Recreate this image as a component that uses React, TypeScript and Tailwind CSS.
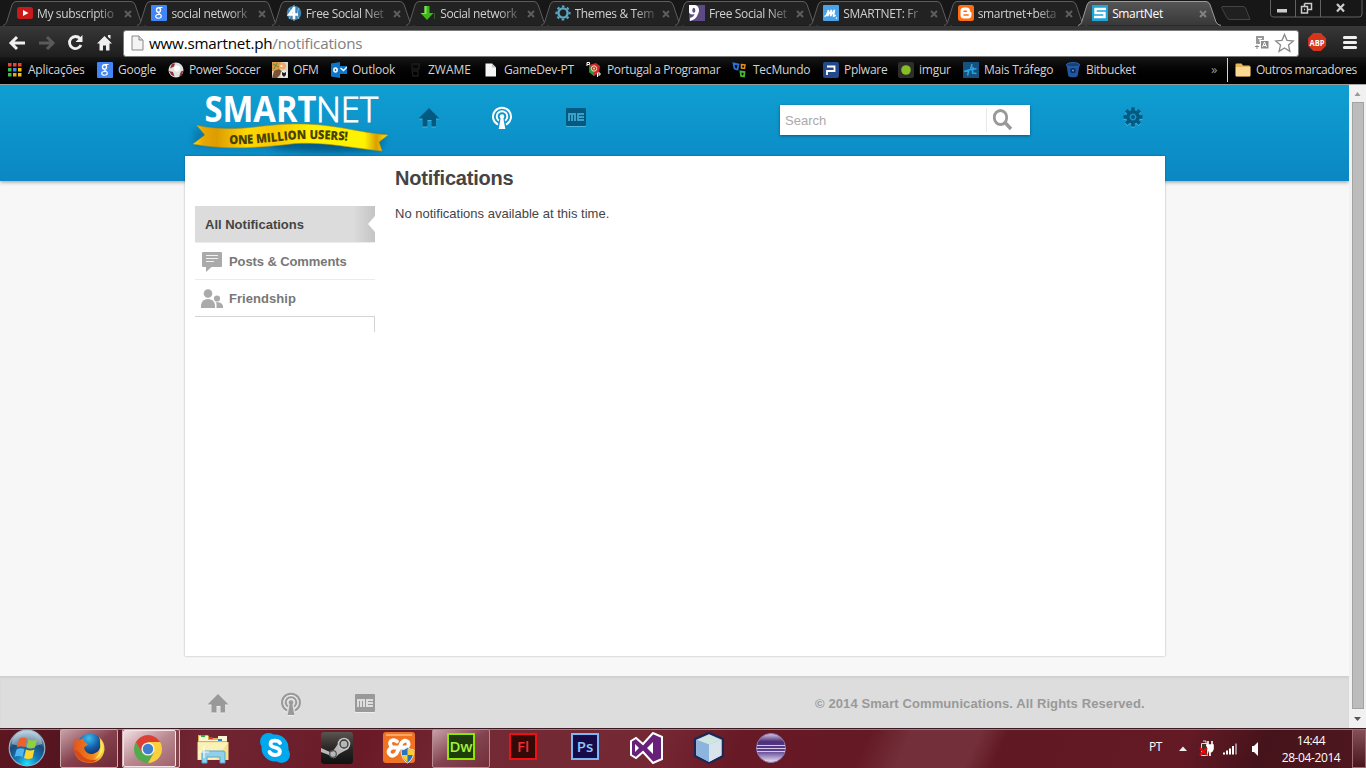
import React from "react";

type IconProps = { className?: string };

const Svg = ({ s = 16, box = "0 0 16 16", children, className = "" }: { s?: number; box?: string; children: React.ReactNode; className?: string }) => (
  <svg width={s} height={s} viewBox={box} className={`shrink-0 ${className}`}>{children}</svg>
);

/* ---------- favicons ---------- */
const YouTube = () => (
  <Svg><rect x="0" y="2" width="16" height="12" rx="2.5" fill="#c81a1a" /><path d="M6 5l5.5 3L6 11z" fill="#fff" /></Svg>
);
const GoogleG = () => (
  <Svg>
    <rect width="16" height="16" rx="1" fill="#4285f4" />
    <g fill="none" stroke="#fff"><ellipse cx="7.500" cy="5" rx="2" ry="2.300" strokeWidth="1.400" /><path d="M8 2.500h3.500M8 7.500c-1.500 1 2.300 1.600 2.300 3.500 0 3-5.600 2.800-5.600.4 0-1.500 1.800-2 3.800-2" strokeWidth="1.200" /></g>
  </Svg>
);
const Four = () => (
  <Svg>
    <circle cx="8" cy="8" r="7.3" fill="#3d83b4" />
    <path d="M8 0v16M3 3c2 2 2 9 0 11M13 3c-2 2-2 9 0 11" stroke="#8fc1e0" fill="none" />
    <path d="M8 2v12M8.500 2.500L3.300 9.500H12" stroke="#fff" strokeWidth="2.600" fill="none" />
  </Svg>
);
const Down = () => (
  <Svg><path d="M4.500 1h5v7h4L7 15 .5 8h4z" fill="#3cb81a" /><path d="M4.500 1h2v8H3L.5 8h4z" fill="#8be25a" /><path d="M14.500 8v6" stroke="#3a5a2c" /></Svg>
);
const GearRing = () => (
  <Svg>
    <circle cx="8" cy="8" r="4.600" fill="none" stroke="#5ba7c4" strokeWidth="2.400" />
    <circle cx="8" cy="8" r="6.600" fill="none" stroke="#5ba7c4" strokeWidth="2" strokeDasharray="2.600 2.580" strokeDashoffset="1.300" />
  </Svg>
);
const Nine = () => (
  <Svg><rect width="16" height="16" fill="#5d4a85" /><path d="M0 0h6c4 1 5 5 3 9-1.500 4-4 6-8 7v-3c3-1 4-2 4.500-4C3 10 0 9 0 7z" fill="#fff" /><ellipse cx="4.800" cy="5.300" rx="1.500" ry="2.500" fill="#5d4a85" /></Svg>
);
const MIcon = () => (
  <Svg><rect width="16" height="16" rx="1" fill="#4aa3e8" /><path d="M1.500 11.500q2 0 4-6.500l-1 6 4-6-1 6 4-6-1 6q1 .5 2-1" stroke="#fff" strokeWidth="1.500" fill="none" /><circle cx="13.500" cy="13" r=".8" fill="#fff" /></Svg>
);
const Blogger = () => (
  <Svg><rect width="16" height="16" rx="2.500" fill="#ff6d10" /><path d="M6 2.500h2.500q3.500 0 3.500 3.500 0 1 .800 1t.700 1v2q0 3.500-3.500 3.500H6q-3.500 0-3.500-3.500V6Q2.500 2.500 6 2.500z" fill="#fff" /><path d="M6 6.200h2.500M6 9.900h4.200" stroke="#ff6d10" strokeWidth="1.500" strokeLinecap="round" /></Svg>
);
const SmartS = () => (
  <Svg><rect width="16" height="16" fill="#1ea4d6" /><path d="M14 4H3.500v4h9v4H2" stroke="#fff" strokeWidth="2.400" fill="none" /></Svg>
);

/* ---------- bookmark icons ---------- */
const Apps = () => (
  <Svg>
    {["#e94435", "#e94435", "#e94435", "#3cba54", "#4285f4", "#f4c20d", "#3cba54", "#f4a20d", "#f4c20d"].map((c, i) => (
      <rect key={i} x={1 + (i % 3) * 5} y={1 + Math.floor(i / 3) * 5} width="3.500" height="3.500" fill={c} />
    ))}
  </Svg>
);
const Ball = () => (
  <Svg><circle cx="8" cy="8" r="7.500" fill="#e2e0e0" /><path d="M4 1.500l3 0-1 3-4 2zM1 9l4 1 1.500 4.500-3-1.500zM13 9.500l2.300-1-1.300 4.500-3 1.800z" fill="#8f3038" /><circle cx="9" cy="6.500" r="3" fill="#fff" /></Svg>
);
const Ofm = () => (
  <Svg><rect width="16" height="16" fill="#d7dad0" /><path d="M0 0h9v6l-5 3H0z" fill="#d99a4a" /><circle cx="10.500" cy="4" r="3.500" fill="#f2a765" /><path d="M2 9l5-2 4 3-6 6H0z" fill="#7b5133" /><path d="M1 2l6 3M5 1l-3 6" stroke="#6b8a3a" /><circle cx="12" cy="12" r="3.500" fill="#eee" /><path d="M10 10l2 1 2-1v3l-2 2-2-2z" fill="#222" /><circle cx="9.500" cy="4" r="1" fill="#fff" /></Svg>
);
const OutlookI = () => (
  <Svg><rect x="8" y="4" width="8" height="8" fill="#0d76c8" /><path d="M9.500 6l3 2.500L16 5" stroke="#fff" strokeWidth="1.400" fill="none" /><path d="M0 1.500L9 0v16l-9-1.500z" fill="#0d76c8" /><ellipse cx="4.500" cy="8" rx="1.600" ry="2" fill="none" stroke="#fff" strokeWidth="1.600" /></Svg>
);
const Zw = () => (
  <Svg><path d="M5 2h7v5H5zM5 9h6v5H6zM11 3h2" stroke="#1d1d1d" fill="none" strokeWidth="1.300" /></Svg>
);
const Doc = () => (
  <Svg><path d="M2.500 1.500h6.500l4 4v9H2.500z" fill="#f5f5f5" /><path d="M9 1.500v4h4z" fill="#c5c5c5" /></Svg>
);
const PaP = () => (
  <Svg><path d="M3 3l7-2 4 3-1 7-5 3-5-4z" fill="#cb2a2a" /><path d="M4 4L3 10l5 4 0-5z" fill="#279839" /><circle cx="8" cy="6.500" r="2.700" fill="none" stroke="#f3e3c0" /><circle cx="8" cy="6.500" r="1" fill="#f0e0a0" /><path d="M1 4V.500h2.500v2H1M11.500 15v-4H14v2h-2.500" stroke="#fff" fill="none" /></Svg>
);
const Tec = () => (
  <Svg><path d="M1.500 1.500l5 1-1 5-3-1z" stroke="#2b71d8" strokeWidth="1.800" fill="none" /><path d="M9.500 2.500l3.500.5-.5 3.500-3-.5z" stroke="#e28d27" strokeWidth="1.500" fill="none" /><path d="M8.500 9.500l4 .5-.5 4.500-3-.5z" stroke="#47b733" strokeWidth="1.800" fill="none" /></Svg>
);
const Ppl = () => (
  <Svg><rect width="16" height="16" rx="2" fill="#244a8c" /><path d="M4 13V9h7.500V4.500H4" stroke="#fff" strokeWidth="1.800" fill="none" /></Svg>
);
const Imgur = () => (
  <Svg><rect width="16" height="16" rx="2" fill="#2d2e2c" /><circle cx="8" cy="8" r="4.800" fill="#85bf25" /></Svg>
);
const Mais = () => (
  <Svg><rect width="16" height="16" fill="#16507d" /><path d="M9 2L7.500 8M1 9.500l5-1.500-1.500 5.500M7.500 8l6-1.500M10 5l-.5 6 4 .5" stroke="#29a3df" strokeWidth="1.600" fill="none" /></Svg>
);
const Bucket = () => (
  <Svg><path d="M1.500 3.500l1.800 10.500c1 1.800 8.400 1.800 9.400 0L14.500 3.500z" fill="#2055a0" /><ellipse cx="8" cy="2.800" rx="6.600" ry="2.200" fill="#174078" stroke="#2b67b7" /><circle cx="8" cy="8.500" r="2.600" fill="#0c2a57" /><circle cx="8" cy="8.500" r="1.100" fill="#5b91d5" /></Svg>
);
const Folder = () => (
  <Svg><path d="M.5 2.500q0-1 1-1h5l1.500 2H14q1.500 0 1.500 1.500v8.500q0 1-1 1h-13q-1 0-1-1z" fill="#e5b65a" /><path d="M.8 5h14.400v8.500q0 .700-.7.700h-13q-.7 0-.7-.7z" fill="#fbd993" /></Svg>
);

/* ---------- tabs ---------- */
const tabs: [React.FC, string][] = [
  [YouTube, "My subscriptio"],
  [GoogleG, "social network"],
  [Four, "Free Social Net"],
  [Down, "Social network"],
  [GearRing, "Themes & Tem"],
  [Nine, "Free Social Net"],
  [MIcon, "SMARTNET: Fr"],
  [Blogger, "smartnet+beta"],
  [SmartS, "SmartNet"],
];

const Tab = ({ Icon, label, active }: { Icon: React.FC; label: string; active: boolean }) => (
  <div className={`relative flex h-[26px] w-[134.400px] shrink-0 items-center pl-[12px] ${active ? "z-10" : ""}`}>
    <svg width="146" height="26" viewBox="0 0 146 26" className="absolute top-0 -left-[2px]">
      <defs>
        <linearGradient id="tabOn" x2="0" y2="1"><stop offset="0" stopColor="#555" /><stop offset="1" stopColor="#383838" /></linearGradient>
      </defs>
      <path
        d="M0 25.500Q2.500 25 3.500 22.500L9 5Q10.200 1.500 13 1.500H128Q131 1.500 132.200 5L138 22Q139.500 25 143 25.500"
        fill={active ? "url(#tabOn)" : "#222"}
        stroke={active ? "#9b9b9b" : "#5d5d5d"}
      />
    </svg>
    <div className="relative"><Icon /></div>
    <div
      className={`relative ml-[4px] w-[82px] pt-px text-[12px] leading-[18px] tracking-[-0.360px] whitespace-nowrap ${
        active ? "text-white" : "text-[#d0d0d0] [mask-image:linear-gradient(to_right,black_72%,transparent_104%)]"
      }`}
    >
      {label}
    </div>
    <svg width="8" height="8" viewBox="0 0 8 8" className="relative mt-px ml-[5px]">
      <path d="M1 1l6 6M7 1L1 7" stroke={active ? "#828282" : "#5d5d5d"} strokeWidth="2" />
    </svg>
  </div>
);

const TabStrip = () => (
  <div className="relative flex h-[26px] pl-[5px]">
    {tabs.map(([I, t], i) => <Tab key={i} Icon={I} label={t} active={i === 8} />)}
    <svg width="32" height="26" viewBox="0 0 32 26" className="ml-[4px]">
      <path d="M3 6.500H24Q26 6.500 27 9L31 19.500H11Q8.500 19.500 7.500 17L3 8.500Q2 6.500 4 6.500" fill="#202020" stroke="#444" />
    </svg>
    <svg width="94" height="18" viewBox="0 0 94 18" className="absolute top-0 left-[1270px]">
      <path d="M.5 0V14Q.5 17 3.500 17H89Q92 17 92 14V0M25.500 0V17M50.500 0V17" fill="none" stroke="#626262" />
      <rect x="7" y="9" width="10" height="3.500" fill="#ccc" />
      <path d="M34.500 3.500H41.500V9.500H37.500V6.500H31.500V13H37.500V9.500M34.500 6V3.500M34 9.500h1" fill="none" stroke="#ccc" strokeWidth="1.500" />
      <path d="M67 4l7 7.500M74 4l-7 7.500" stroke="#ccc" strokeWidth="2.200" />
    </svg>
  </div>
);

const Toolbar = () => (
  <div className="flex h-[31px] items-center bg-linear-to-b from-[#383838] to-[#1e1e1e]">
    <svg width="123" height="31" viewBox="0 0 123 31" className="shrink-0">
      <path d="M25 17H11.500M17 11l-6 6 6 6" stroke="#f0f0f0" strokeWidth="3" fill="none" />
      <path d="M39 17H52M47 11l6 6-6 6" stroke="#5a5a5a" strokeWidth="3" fill="none" />
      <path d="M80 12.500A6 6 0 1 0 81 19" stroke="#f0f0f0" strokeWidth="2.800" fill="none" />
      <path d="M82.500 9v7h-7z" fill="#f0f0f0" />
      <path d="M97 17.500L104.500 10 112 17.500h-2.500V24.500h-3.500v-5h-3v5h-3.500v-7zM108 9h2.500v4L108 11z" fill="#f0f0f0" />
    </svg>
    <div className="mt-[3px] flex h-[27px] w-[1176px] shrink-0 items-center rounded-[3px] border border-[#7b7b7b] bg-white pl-[7px]">
      <svg width="13" height="16" viewBox="0 0 13 16" className="shrink-0"><path d="M1 1h7l4 4v10H1z" fill="#f4f4f4" stroke="#888" /><path d="M8 1v4h4" fill="#ddd" stroke="#888" /></svg>
      <div className="-mt-px ml-[5px] w-[1105px] text-[15.200px] leading-[20px] tracking-[-0.210px] text-[#808080]"><span className="text-black">www.smartnet.ph</span>/notifications</div>
      <svg width="42" height="22" viewBox="0 0 42 22" className="shrink-0">
        <rect x="2" y="4" width="8" height="8" fill="#999" /><path d="M4 6.500h4M6 6v4" stroke="#fff" /><rect x="6.500" y="8.500" width="8.500" height="8.500" fill="#8a8a8a" stroke="#fff" /><path d="M8.500 15l2-5 2 5M9.300 13.500h2.500" stroke="#fff" fill="none" /><path d="M1 14.500h4M3 13v4" stroke="#888" fill="none" />
        <path d="M30.500 2.500l2.500 5.800 6.300.6-4.800 4.200 1.400 6.200-5.400-3.300-5.400 3.300 1.400-6.200-4.800-4.200 6.300-.6z" fill="#fff" stroke="#888" strokeWidth="1.300" />
      </svg>
    </div>
    <svg width="66" height="31" viewBox="0 0 66 31" className="shrink-0">
      <path d="M14.300 7h7.500l5.300 5.300v7.400L21.800 25h-7.500L9.100 19.700v-7.400z" fill="#d4351c" />
      <text x="18" y="19.500" textAnchor="middle" textLength="15" lengthAdjust="spacingAndGlyphs" fontFamily="Open Sans" fontWeight="700" fontSize="9.500" fill="#fff">ABP</text>
      <path d="M45.500 11.500h11M45.500 16.500h11M45.500 21.500h11" stroke="#efefef" strokeWidth="3.200" strokeLinecap="round" />
    </svg>
  </div>
);

const Bookmark = ({ Icon, label, w }: { Icon: React.FC; label: string; w: string }) => (
  <div className={`flex shrink-0 items-center gap-[5px] whitespace-nowrap ${w}`}><Icon /><span>{label}</span></div>
);

const Bookmarks = () => (
  <div className="flex h-[27px] items-center bg-linear-to-b from-[#171717] to-black pb-px pl-[7px] font-['Open_Sans',sans-serif] text-[12px] tracking-[-0.240px] text-[#d2d2d2]">
    <Bookmark Icon={Apps} label="Aplicações" w="w-[90px]" />
    <Bookmark Icon={GoogleG} label="Google" w="w-[71px]" />
    <Bookmark Icon={Ball} label="Power Soccer" w="w-[104px] tracking-[-0.350px]" />
    <Bookmark Icon={Ofm} label="OFM" w="w-[59px]" />
    <Bookmark Icon={OutlookI} label="Outlook" w="w-[76px]" />
    <Bookmark Icon={Zw} label="ZWAME" w="w-[76px] tracking-[0px]" />
    <Bookmark Icon={Doc} label="GameDev-PT" w="w-[103px]" />
    <Bookmark Icon={PaP} label="Portugal a Programar" w="w-[146px] tracking-[-0.350px]" />
    <Bookmark Icon={Tec} label="TecMundo" w="w-[91px]" />
    <Bookmark Icon={Ppl} label="Pplware" w="w-[75px]" />
    <Bookmark Icon={Imgur} label="imgur" w="w-[65px]" />
    <Bookmark Icon={Mais} label="Mais Tráfego" w="w-[102px]" />
    <Bookmark Icon={Bucket} label="Bitbucket" w="w-[146px] tracking-[-0.350px]" />
    <span className="w-[16px] text-[13px] text-[#999]">»</span>
    <div className="mr-[7px] h-[24px] w-px bg-[#cdd3dc]" />
    <Bookmark Icon={Folder} label="Outros marcadores" w="w-[125px] tracking-[-0.480px]" />
  </div>
);

/* ---------- site icons ---------- */
const House = ({ className }: IconProps) => (
  <svg width="22" height="20" viewBox="0 0 22 20" className={className}><path d="M11 0L21.500 10.500H18V18.500h-4.500V12h-4v6.500H4.500v-8H.5z" fill="currentColor" /></svg>
);
const Cast = ({ className }: IconProps) => (
  <svg width="22" height="24" viewBox="0 0 22 24" className={className}>
    <g fill="none" stroke="currentColor" strokeWidth="2"><path d="M7 18.700A9 9 0 1 1 15 18.700" /><path d="M7.800 14.700A5.300 5.300 0 1 1 14.200 14.700" /></g>
    <circle cx="11" cy="10.500" r="2.300" fill="currentColor" /><path d="M9.700 12h2.600l2 11H7.700z" fill="currentColor" />
  </svg>
);
const Me = ({ className, ink }: { className?: string; ink: string }) => (
  <svg width="20" height="19" viewBox="0 0 20 19" className={className}>
    <rect width="20" height="18" rx="1" fill="currentColor" />
    <path d="M2 13V5h8v8H8V7H7v6H5V7H4v6zM11 5h7v2h-5v1h5v2h-5v1h5v2h-7z" fill={ink} />
  </svg>
);
const Gear = () => (
  <svg width="20" height="21" viewBox="-10 -10 20 21">
    {[0, 1].map((k) => (
      <g key={k} fill={k ? "#035a80" : "#4ab2dc"} transform={k ? "" : "translate(0 1)"}>
        <circle r="6.800" />
        {[0, 45, 90, 135].map((a) => <rect key={a} x="-1.800" y="-9.600" width="3.600" height="19.200" transform={`rotate(${a})`} />)}
      </g>
    ))}
    <circle r="2.700" fill="none" stroke="#1b93c5" strokeWidth="1.500" />
  </svg>
);

const Logo = () => (
  <svg width="215" height="71" viewBox="0 0 215 71" className="shrink-0">
    <defs>
      <linearGradient id="gold"><stop offset="0" stopColor="#ffe000" /><stop offset=".05" stopColor="#e8a800" /><stop offset=".12" stopColor="#dd9c00" /><stop offset=".28" stopColor="#ffd800" /><stop offset=".42" stopColor="#f8c800" /><stop offset=".6" stopColor="#fff200" /><stop offset=".88" stopColor="#fff200" /><stop offset=".94" stopColor="#d8a000" /><stop offset="1" stopColor="#ffe600" /></linearGradient>
      <filter id="soft" x="-20%" y="-60%" width="140%" height="220%"><feGaussianBlur stdDeviation="3" /></filter>
      <path id="wave" d="M49 59C80 60 105 54 128 54C145 54 155 55 172 56" />
    </defs>
    <ellipse cx="145" cy="60" rx="55" ry="7" fill="#06496d" opacity=".6" filter="url(#soft)" />
    <path d="M14 44L208 50 200 66 14 62z" fill="#064e78" opacity=".35" filter="url(#soft)" />
    <g fill="#fff" fontFamily="Open Sans">
      <text x="24.500" y="36.500" fontSize="35" fontWeight="700" textLength="112" lengthAdjust="spacingAndGlyphs">SMART</text>
      <text x="136" y="36.500" fontSize="35" fontWeight="300" textLength="62" lengthAdjust="spacingAndGlyphs" stroke="#fff" strokeWidth=".9">NET</text>
    </g>
    <path d="M17 40.500C55 49 85 38 120 39C155 39 180 48 208 50L199 57 202 66C165 62 145 57 115 58.500C80 63 45 65 13 59L25 50z" fill="url(#gold)" stroke="#c99200" strokeWidth=".6" />
    <text fontFamily="Open Sans" fontWeight="800" fontSize="12.500" fill="#4a4100"><textPath href="#wave" textLength="119" lengthAdjust="spacingAndGlyphs">ONE MILLION USERS!</textPath></text>
  </svg>
);

const Header = () => (
  <div className="flex h-[96px] items-start bg-linear-to-b from-[#0f9fd1] to-[#0b87c4] pl-[180px] shadow-[0_1px_4px_rgba(0,0,0,0.4)]">
    <Logo />
    <div className="flex w-[385px] pl-[23px] text-[#035a80]">
      <House className="mt-[23px] drop-shadow-[0_1px_0_#4ab2dc]" />
      <Cast className="mt-[21px] ml-[51px] text-white" />
      <Me className="mt-[23px] ml-[53px] drop-shadow-[0_1px_0_#4ab2dc]" ink="#3a9fc9" />
    </div>
    <div className="mt-[20px] flex h-[30px] w-[250px] shrink-0 items-center bg-white pl-[5px] text-[13px] text-[#a9a9a9] shadow-[0_1px_3px_rgba(0,0,0,0.4)]">
      <span className="w-[201px] pt-[2px]">Search</span>
      <div className="mr-[6px] h-[24px] w-px bg-[#e8e8e8]" />
      <svg width="20" height="22" viewBox="0 0 20 22"><ellipse cx="7.500" cy="8.500" rx="6.200" ry="7" fill="none" stroke="#999" strokeWidth="2.800" /><path d="M12 13.500l6 6.500" stroke="#999" strokeWidth="3.400" /></svg>
    </div>
    <div className="mt-[22px] ml-[93px]"><Gear /></div>
  </div>
);

const Sidebar = () => (
  <div className="ml-[10px] w-[180px] pt-[50px] text-[13px] font-bold text-[#777]">
    <div className="flex h-[37px] items-center justify-between border-b border-[#ececec] bg-[linear-gradient(to_right,#dcdcdc_88%,#c4c4c4)] pl-[10px] text-[#444]">
      <span className="pt-[2px]">All Notifications</span>
      <svg width="7" height="16" viewBox="0 0 7 16"><path d="M7 0v16L0 8z" fill="#fff" /></svg>
    </div>
    <div className="flex h-[37px] items-center border-b border-[#ececec] pl-[7px]">
      <svg width="20" height="20" viewBox="0 0 20 20" className="mt-[2px]"><path d="M1 0h18q1 0 1 1v13q0 1-1 1h-9.500L4 20v-5H1q-1 0-1-1V1q0-1 1-1z" fill="#aaa" /><path d="M4 3.500h12M4 6.500h12M4 9.500h8" stroke="#f2f2f2" /></svg>
      <span className="ml-[7px] pt-[2px] tracking-[-0.100px]">Posts &amp; Comments</span>
    </div>
    <div className="flex h-[37px] items-center border-b border-[#d4d4d4] pl-[6px]">
      <svg width="22" height="20" viewBox="0 0 22 20" fill="#aaa" className="mt-[2px]"><circle cx="7" cy="4.500" r="4.300" /><path d="M0 19v-3Q1 10 7 10t7 6v3z" /><circle cx="16" cy="9.500" r="3.100" /><path d="M15.500 19v-4.500l-1-1.200Q21 12.500 22 17v2z" /></svg>
      <span className="ml-[6px] pt-[2px] tracking-[0.060px]">Friendship</span>
    </div>
    <div className="h-[15px] border-r border-[#d4d4d4]" />
  </div>
);

const Page = () => (
  <div className="flex h-[643px] bg-[#f7f7f7] font-['Liberation_Sans',Arial,sans-serif]">
    <div className="w-[1349px]">
      <Header />
      <div className="relative -mt-[25px] ml-[185px] flex h-[500px] w-[980px] bg-white shadow-[0_0_2px_rgba(0,0,0,0.3)]">
        <Sidebar />
        <div className="ml-[20px] pt-[9px] text-[#444]">
          <h1 className="text-[20px] leading-[26px] font-bold tracking-[-0.200px]">Notifications</h1>
          <p className="mt-[13px] text-[13px] leading-[20px] tracking-[0.010px]">No notifications available at this time.</p>
        </div>
      </div>
      <div className="mt-[20px] flex h-[52px] items-start border-t border-[#cfcfcf] bg-[#ddd] pl-[207px] text-[#999] shadow-[inset_0_1px_2px_#d0d0d0]">
        <House className="mt-[17px] drop-shadow-[0_1px_0_#eee]" />
        <Cast className="mt-[15px] ml-[51px] drop-shadow-[0_1px_0_#eee]" />
        <Me className="mt-[17px] ml-[53px] drop-shadow-[0_1px_0_#eee]" ink="#ddd" />
        <span className="mt-[17px] ml-[440px] text-[13px] leading-[20px] font-bold tracking-[0.100px] whitespace-nowrap">© 2014 Smart Communications. All Rights Reserved.</span>
      </div>
    </div>
    <div className="flex w-[17px] flex-col items-center bg-[#f1f1f1]">
      <svg width="17" height="17" viewBox="0 0 17 17"><path d="M5.500 11h6L8.500 7z" fill="#999" /></svg>
      <div className="h-[607px] w-[12px] border border-[#a3a3a3] bg-[#bcbcbc]" />
      <svg width="17" height="19" viewBox="0 0 17 19"><path d="M5 8h7l-3.500 4z" fill="#555" /></svg>
    </div>
  </div>
);

/* ---------- taskbar ---------- */
const Orb = () => (
  <svg width="38" height="38" viewBox="0 0 38 38">
    <defs><radialGradient id="orb" cx=".5" cy=".95" r=".9"><stop offset="0" stopColor="#1ee3ff" /><stop offset=".35" stopColor="#1478b8" /><stop offset=".7" stopColor="#1c4a78" /><stop offset="1" stopColor="#a9c0d0" /></radialGradient></defs>
    <circle cx="19" cy="19" r="17.800" fill="url(#orb)" stroke="#8fb2c6" strokeWidth="1.200" />
    <path d="M4 15A15 14 0 0 1 34 15Q19 21 4 15z" fill="#cfe3ee" opacity=".45" />
    <path d="M11 10q4-2.500 8-.5l-2 8.500q-4-1.500-8 .5z" fill="#f0602a" /><path d="M20.500 10.500q4 2 8.500 0l-2 8q-4.500 2-8.500 0z" fill="#93cf3d" />
    <path d="M8.500 20.500q4-2 8-.5l-2 8q-4-2-8 0z" fill="#4fb4f0" /><path d="M18 20.500q4 2 8.500 0l-2 8.500q-4.500 2-8.500 0z" fill="#ffd42c" />
  </svg>
);
const Firefox = () => (
  <svg width="32" height="32" viewBox="0 0 32 32">
    <defs>
      <linearGradient id="fx" x2="1"><stop offset="0" stopColor="#e2571b" /><stop offset=".6" stopColor="#f0801c" /><stop offset="1" stopColor="#ffd83a" /></linearGradient>
      <radialGradient id="globe" cx=".45" cy=".2" r=".8"><stop offset="0" stopColor="#3cc0ee" /><stop offset=".5" stopColor="#1660ac" /><stop offset="1" stopColor="#0c2359" /></radialGradient>
    </defs>
    <circle cx="17" cy="13.500" r="12" fill="url(#globe)" />
    <path d="M2 6l3.500 2.500Q8 6.500 11 6l0 3 4 3.500-4 3 1 3q4 5 9 3 6-2 6.500-8Q28 9 26 5q6 5 5.500 13Q29 31 16 31 1 30 1 15q0-5 1-9z" fill="url(#fx)" />
    <path d="M27 7q4 5 3 11-2 7-8 9 5-5 5.500-11z" fill="#ffe65a" />
    <path d="M1.500 17Q3 29 16 30.500q5 0 9-3-9 2-15-3Q7 20 1.500 17z" fill="#d84a16" />
  </svg>
);
const Chrome = () => (
  <svg width="30" height="30" viewBox="-15 -15 30 30">
    <path d="M0-7L0 0 -6.060 3.500 -12.120-7A14 14 0 0 0 0 14L6.060 3.500z" fill="#50ab4a" />
    <path d="M0-7H12.120A14 14 0 0 1 0 14L6.060 3.500z" fill="#fbd03b" />
    <path d="M-12.120-7A14 14 0 0 1 12.120-7H0L-6.060 3.500z" fill="#dd3f34" />
    <circle r="6.600" fill="#f1f1f1" /><circle r="5.200" fill="#3f7fcb" />
  </svg>
);
const Explorer = () => (
  <svg width="34" height="32" viewBox="0 0 34 32">
    <path d="M2 3h10l2 3h17v22H2z" fill="#d8b24e" /><path d="M3 4h9v4h10V4h9v5H3z" fill="#fbf6d6" />
    <path d="M5 3h4v2H5z" fill="#2bb52b" /><path d="M13 5h4v2h-4z" fill="#d83a2a" /><path d="M22 7h4v2h-4z" fill="#2a82d8" />
    <path d="M1.500 10h31v18h-31z" fill="#f5e08d" /><path d="M2 10.500h30l-12 17H2z" fill="#fbf0b5" />
    <path d="M6 31V21q0-2 2-2h19q2 0 2 2v10h-5v-6H11v6z" fill="#8fd1ec" stroke="#5aa5c9" />
    <path d="M8 14v12M3 20h10" stroke="#fff" strokeWidth="1.200" opacity=".9" />
  </svg>
);
const Skype = () => (
  <svg width="32" height="32" viewBox="0 0 32 32">
    <circle cx="16" cy="16" r="13.500" fill="#00a9ed" /><circle cx="9.500" cy="9.500" r="8.500" fill="#00a9ed" /><circle cx="22.500" cy="22.500" r="8.500" fill="#00a9ed" />
    <path d="M21 11Q19.500 8.700 16 8.700q-4.500 0-4.500 3.300 0 2.500 4.700 3.500t4.700 4q0 3.500-4.700 3.500-4 0-5.700-3" stroke="#fff" strokeWidth="3.800" fill="none" strokeLinecap="round" />
  </svg>
);
const Steam = () => (
  <svg width="32" height="32" viewBox="0 0 32 32">
    <defs><linearGradient id="st" x2="0" y2="1"><stop offset="0" stopColor="#5b5551" /><stop offset=".5" stopColor="#2a2726" /><stop offset="1" stopColor="#111" /></linearGradient></defs>
    <rect width="32" height="32" rx="3" fill="url(#st)" /><path d="M0 16l9 4 3-1 5-7 10 5-9 5-2 2q-4 5-8-1L0 20z" fill="#b8b8b8" />
    <circle cx="23" cy="12" r="6.300" fill="#c4c4c4" /><circle cx="23" cy="12" r="4" fill="#b5b5b5" stroke="#383838" strokeWidth="1.300" /><circle cx="12" cy="22" r="3.300" fill="none" stroke="#555" strokeWidth="1.200" />
  </svg>
);
const Xampp = () => (
  <svg width="32" height="32" viewBox="0 0 32 32">
    <rect width="32" height="31" rx="3" fill="#ee7424" /><path d="M3 2h26v2H3z" fill="#f9a66c" />
    <path d="M14 9.500q-3-2.500-6-.5-2.500 3 1.500 6.500-5 2-3.500 6 3 4.500 7.500 0L18.500 11q3-4 6.500-1 2 3.500-2.500 6 5 2 4 6.500M9.500 15.500h5M17 15.500h6" stroke="#fff" strokeWidth="3.800" fill="none" strokeLinecap="round" />
    <path d="M18 18q4-.5 6.500-2.500Q27 17.500 31 18q0 9-6.500 13Q18 27 18 18z" fill="#2773c8" stroke="#e9e9e9" /><path d="M24.500 16.500V23H30Q31 20 30.500 18.500zM24.500 23v7Q20 27 19 23z" fill="#f5cf2e" />
  </svg>
);
const Adobe = ({ t, c, bg, fill }: { t: string; c: string; bg: string; fill: string }) => (
  <svg width="28" height="27" viewBox="0 0 28 27" className="-mt-[4px]"><rect x="1" y="1" width="26" height="25" fill={bg} stroke={c} strokeWidth="2" /><text x="14" y="19" textAnchor="middle" fontFamily="Open Sans" fontWeight="600" fontSize="15" fill={fill}>{t}</text></svg>
);
const VStudio = () => (
  <svg width="34" height="32" viewBox="0 0 34 32"><path d="M1 9l5-3 7 6L23 1l9 4v22l-9 4-10-11-7 6-5-3z" fill="#68217a" stroke="#fff" strokeWidth="2" /><path d="M5 12v8l4-4zM17 16l6-6v12z" fill="#fff" /></svg>
);
const Cube = () => (
  <svg width="32" height="32" viewBox="0 0 32 32"><path d="M16 1l14 6v17l-14 7-14-7V7z" fill="#aac4dd" stroke="#1b2855" strokeWidth="2.200" /><path d="M16 2.500l12 5.500-12 4.500L4 8z" fill="#cfe6e1" /><path d="M4 8l12 4.500V30L4 23.500z" fill="#8db3df" /><path d="M28 8l-12 4.500V30l12-6.500z" fill="#d9e3ec" /></svg>
);
const Eclipse = () => (
  <svg width="32" height="32" viewBox="0 0 32 32">
    <defs><linearGradient id="ec" x2="0" y2="1"><stop offset="0" stopColor="#d8cce8" /><stop offset=".28" stopColor="#4d2f79" /><stop offset=".6" stopColor="#5b4090" /><stop offset="1" stopColor="#efe6f6" /></linearGradient></defs>
    <circle cx="16" cy="16" r="14.500" fill="url(#ec)" stroke="#8b79ac" /><path d="M2 13.500h28M1.500 16.500h29M2 19.500h28" stroke="#d5c8e6" strokeWidth="1" />
  </svg>
);

const Slot = ({ children, look = "" }: { children: React.ReactNode; look?: string }) => (
  <div className={`mr-[4px] flex h-[39px] w-[58px] shrink-0 items-center justify-center rounded-[2px] pr-px pb-px ${look}`}>{children}</div>
);

const Tray = () => (
  <svg width="88" height="24" viewBox="0 0 88 24" className="shrink-0">
    <path d="M4 14h8L8 9.500z" fill="#eee" />
    <path d="M26.500 6.500h6v12h-6zM28 4h3v2" fill="#3a3030" stroke="#ddd" /><path d="M31 8h7v4q-1 3-3 3v4M33 4v4M37 4v4" stroke="#fff" strokeWidth="1.600" fill="#fff" /><path d="M25 11l7 7M32 11l-7 7" stroke="#f00" strokeWidth="2.200" />
    <path d="M49 17.500v-2M52 17.500v-4M55 17.500v-6M58 17.500V9" stroke="#fff" strokeWidth="2" /><path d="M61 17.500V6.500" stroke="#a48c92" strokeWidth="2" />
    <path d="M77 9h2L83 5v14l-4-4h-2z" fill="#fff" />
  </svg>
);

const Taskbar = () => (
  <div className="flex h-[40px] border-t border-[#3b1a22] bg-[linear-gradient(115deg,#5c1720_0%,#551520_5%,#702532_15%,#6a1a26_27%,#722a35_35%,#752833_48%,#671a25_54%,#651924_63%,#73303a_66%,#73303a_71%,#601822_73%,#641a25_86%,#45131b_92%,#501820_100%)] text-white shadow-[inset_0_1px_0_#a9757d]">
    <div className="w-[60px] pl-[8px]"><Orb /></div>
    <Slot look="border border-[#cda7ae] bg-linear-to-br from-[#c9a3aa] via-[#85414d] to-[#6c2a36]"><Firefox /></Slot>
    <div className="mr-[4px] flex h-[39px] w-[58px] shrink-0 rounded-[2px] border border-[#d7b8be] bg-[#82444e]">
      <div className="flex w-[53px] items-center justify-center rounded-[2px] border border-[#f3e3e6] bg-linear-to-br from-[#f0dfe2] via-[#b98990] to-[#a0626c] pr-[3px]"><Chrome /></div>
    </div>
    <Slot><Explorer /></Slot>
    <Slot><Skype /></Slot>
    <Slot><Steam /></Slot>
    <Slot><Xampp /></Slot>
    <Slot look="border border-[#b98890] bg-linear-to-br from-[#c7a2a9] via-[#824450] to-[#722f3a]"><Adobe t="Dw" c="#8fe600" bg="#1f3d0c" fill="#a3f23c" /></Slot>
    <Slot><Adobe t="Fl" c="#f01010" bg="#340a08" fill="#f03030" /></Slot>
    <Slot><Adobe t="Ps" c="#7ab8f5" bg="#180a48" fill="#8cc6fa" /></Slot>
    <Slot><VStudio /></Slot>
    <Slot><Cube /></Slot>
    <Slot><Eclipse /></Slot>
    <div className="flex flex-1 items-center pl-[345px] text-[12px] tracking-[-0.400px]">
      <span className="w-[26px] pb-[4px] text-[12px]">PT</span>
      <Tray />
      <div className="ml-[18px] w-[60px] text-center leading-[17px] whitespace-nowrap">14:44<br />28-04-2014</div>
    </div>
    <div className="w-[14px] border border-[#a36c75] bg-linear-to-b from-[#83505a] to-[#4b151e]" />
  </div>
);

export default function App() {
  return (
    <div className="h-[768px] w-[1366px] overflow-hidden bg-[#171717] font-['Open_Sans',sans-serif]">
      <TabStrip />
      <Toolbar />
      <Bookmarks />
      <div className="h-px bg-[#aaa]" />
      <Page />
      <Taskbar />
    </div>
  );
}
